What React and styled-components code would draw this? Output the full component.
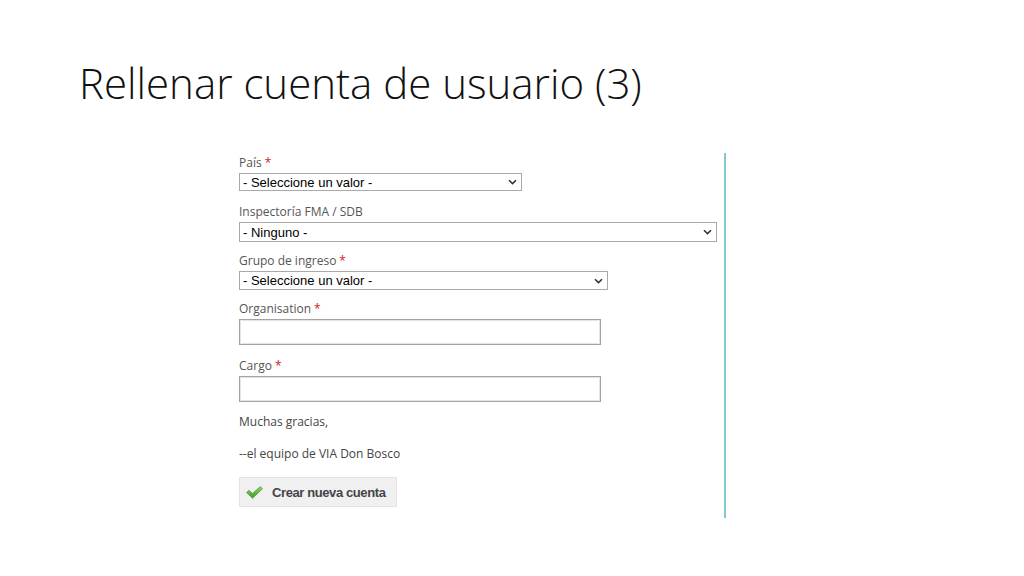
import React from "react";
import styled, { createGlobalStyle } from "styled-components";

const GlobalStyle = createGlobalStyle`
  body {
    margin: 0;
    background: #fff;
  }
`;

const Slide = styled.div`
  width: 1024px;
  height: 576px;
  overflow: hidden;
  background: #fff;
`;

const Title = styled.h1`
  margin: 0;
  padding: 57px 0 0 79px;
  font-family: "Open Sans", sans-serif;
  font-weight: 300;
  font-size: 42px;
  line-height: 52px;
  color: #111;
`;

const Panel = styled.div`
  margin: 44px 0 0 230px;
  width: 496px;
  height: 365px;
  border-right: 2px solid #86c6d1;
  padding: 2px 0 0 9px;
  box-sizing: border-box;
`;

const Field = styled.div`
  margin-bottom: ${p => p.gap}px;
`;

const Label = styled.div`
  font-family: "Open Sans", sans-serif;
  font-size: 12px;
  line-height: 16px;
  color: #555;
  margin-bottom: 2px;
`;

const Req = styled.span`
  color: #d21919;
  margin-left: 3px;
`;

const SelectBox = styled.div`
  width: ${p => p.w}px;
  height: ${p => p.h || 18}px;
  box-sizing: border-box;
  border: 1px solid #a9a9a9;
  background: #fff;
  display: flex;
  align-items: center;
  justify-content: space-between;
  padding: 0 4px 0 3px;
  font-family: "Liberation Sans", Arial, sans-serif;
  font-size: 13px;
  color: #000;
`;

const Chevron = () => (
  <svg width="9" height="6" viewBox="0 0 9 6">
    <path d="M1 1.2 L4.5 4.6 L8 1.2" fill="none" stroke="#333" strokeWidth="1.6" />
  </svg>
);

const TextInput = styled.div`
  width: 362px;
  height: 26px;
  box-sizing: border-box;
  border: 1px solid #a3a3a3;
  box-shadow: inset 0 0 0 1px #e4e4e4;
  background: #fff;
`;

const Note = styled.p`
  margin: 0 0 ${p => p.gap}px;
  font-family: "Open Sans", sans-serif;
  font-size: 12px;
  line-height: 16px;
  color: #444;
`;

const Button = styled.div`
  width: 158px;
  height: 30px;
  box-sizing: border-box;
  background: #f0f0f0;
  border: 1px solid #e3e3e3;
  display: flex;
  align-items: center;
  gap: 9px;
  padding-left: 6px;
  font-family: "Liberation Sans", Arial, sans-serif;
  font-weight: bold;
  font-size: 13px;
  letter-spacing: -0.4px;
  color: #444;
`;

const Check = () => (
  <svg width="17" height="13" viewBox="0 0 17 13">
    <defs>
      <linearGradient id="g" x1="0" y1="0" x2="0" y2="1">
        <stop offset="0" stopColor="#8fd66a" />
        <stop offset="1" stopColor="#3f9a2a" />
      </linearGradient>
    </defs>
    <path d="M0.5 6.5 L3 4.3 L6.5 7.4 L14.3 0.6 L16.5 2.7 L6.6 12.3 Z" fill="url(#g)" stroke="#3e8d2c" strokeWidth="0.6" />
  </svg>
);

export default function App() {
  return (
    <Slide>
      <GlobalStyle />
      <Title>Rellenar cuenta de usuario (3)</Title>
      <Panel>
        <Field gap={13}>
          <Label>País<Req>*</Req></Label>
          <SelectBox w={283}>
            <span>- Seleccione un valor -</span>
            <Chevron />
          </SelectBox>
        </Field>
        <Field gap={11}>
          <Label>Inspectoría FMA / SDB</Label>
          <SelectBox w={478} h={20}>
            <span>- Ninguno -</span>
            <Chevron />
          </SelectBox>
        </Field>
        <Field gap={11}>
          <Label>Grupo de ingreso<Req>*</Req></Label>
          <SelectBox w={369} h={19}>
            <span>- Seleccione un valor -</span>
            <Chevron />
          </SelectBox>
        </Field>
        <Field gap={13}>
          <Label>Organisation<Req>*</Req></Label>
          <TextInput />
        </Field>
        <Field gap={12}>
          <Label>Cargo<Req>*</Req></Label>
          <TextInput />
        </Field>
        <Note gap={16}>Muchas gracias,</Note>
        <Note gap={15}>--el equipo de VIA Don Bosco</Note>
        <Button>
          <Check />
          Crear nueva cuenta
        </Button>
      </Panel>
    </Slide>
  );
}
